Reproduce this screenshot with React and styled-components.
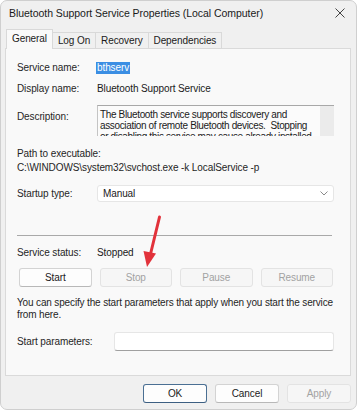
import styled, { createGlobalStyle } from "styled-components"

const Global = createGlobalStyle`
  body {
    margin: 0;
    background: #ffffff;
    font-family: 'Liberation Sans', Arial, sans-serif;
  }
`

export default function App() {
  return (<>
    <Global />
    <Window>
      <TitleBar>
        <Title>Bluetooth Support Service Properties (Local Computer)</Title>
        <Close>
          <svg width="10" height="10" viewBox="0 0 10 10">
            <path d="M0.5 0.5 L9.5 9.5 M9.5 0.5 L0.5 9.5" stroke="#444" strokeWidth="1" fill="none" />
          </svg>
        </Close>
      </TitleBar>
      <Content>
        <TabRow>
          <Tab $active>General</Tab>
          <Tab>Log On</Tab>
          <Tab>Recovery</Tab>
          <Tab>Dependencies</Tab>
        </TabRow>
        <Panel>
          <Row $mt={12}>
            <Label>Service name:</Label>
            <Selected>bthserv</Selected>
          </Row>
          <Row $mt={8}>
            <Label>Display name:</Label>
            <Value>Bluetooth Support Service</Value>
          </Row>
          <Row $mt={10} $top>
            <Label $pt={5}>Description:</Label>
            <DescBox>
              <DescText>{"The Bluetooth service supports discovery and\nassociation of remote Bluetooth devices.  Stopping\nor disabling this service may cause already installed"}</DescText>
              <Scroll />
            </DescBox>
          </Row>
          <Block $mt={11}>
            <Line>Path to executable:</Line>
            <Line>C:\WINDOWS\system32\svchost.exe -k LocalService -p</Line>
          </Block>
          <Row $mt={10}>
            <Label>Startup type:</Label>
            <Select>
              <span>Manual</span>
              <svg width="8" height="5" viewBox="0 0 8 5">
                <path d="M0.5 0.5 L4 4 L7.5 0.5" stroke="#8a8a8a" strokeWidth="1" fill="none" />
              </svg>
            </Select>
          </Row>
          <Separator />
          <Row $mt={10}>
            <Label>Service status:</Label>
            <Value>Stopped</Value>
          </Row>
          <ButtonRow>
            <Button $w={72.5}>Start</Button>
            <Button $w={72.5} disabled>Stop</Button>
            <Button $w={72.5} disabled>Pause</Button>
            <Button $w={72.5} disabled>Resume</Button>
          </ButtonRow>
          <Note>You can specify the start parameters that apply when you start the service<br />from here.</Note>
          <Row $mt={11}>
            <Label $w={97}>Start parameters:</Label>
            <Input />
          </Row>
        </Panel>
        <Footer>
          <Button $w={64} $default>OK</Button>
          <Button $w={64}>Cancel</Button>
          <Button $w={64} disabled>Apply</Button>
        </Footer>
      </Content>
      <Arrow width="30" height="60" viewBox="135 212 30 60">
        <path d="M159.5 217 L150.5 254" stroke="#e2323b" strokeWidth="3" strokeLinecap="round" fill="none" />
        <polygon points="147,267 143.5,251 156,253.5" fill="#e2323b" />
      </Arrow>
    </Window>
  </>);
}

const Window = styled.div`
position: relative;
width: 357px;
height: 410px;
box-sizing: border-box;
background: #f0f0f0;
border: 1px solid #cfcfcf;
border-radius: 7px;
overflow: hidden;
display: flex;
flex-direction: column;
font-size: 10px;
letter-spacing: -0.1px;
color: #1b1b1b;
`

const TitleBar = styled.div`
display: flex;
align-items: center;
justify-content: space-between;
height: 24px;
padding-left: 8px;
`

const Title = styled.div`
font-size: 10.5px;
letter-spacing: -0.05px;
color: #1a1a1a;
`

const Close = styled.div`
display: flex;
align-items: center;
justify-content: center;
width: 32px;
height: 24px;
`

const Content = styled.div`
display: flex;
flex-direction: column;
padding: 5px 5px 0 4px;
`

const TabRow = styled.div`
display: flex;
align-items: flex-end;
height: 19px;
padding-left: 1px;
margin-bottom: -1px;
position: relative;
z-index: 1;
`

const Tab = styled.div`
display: flex;
align-items: center;
box-sizing: border-box;
height: ${p => p.$active ? 20 : 17}px;
padding: 0 5px ${p => p.$active ? 2 : 0}px;
margin-left: ${p => p.$active ? 0 : -1}px;
background: ${p => p.$active ? '#f9f9f9' : '#f0f0f0'};
border: 1px solid #d9d9d9;
border-bottom: ${p => p.$active ? 'none' : '1px solid #d9d9d9'};
color: #1a1a1a;
&:first-child { margin-left: 0; }
`

const Panel = styled.div`
display: flex;
flex-direction: column;
box-sizing: border-box;
height: 328px;
background: #f9f9f9;
border: 1px solid #dadada;
padding: 0 16px 0 11px;
`

const Row = styled.div`
display: flex;
align-items: ${p => p.$top ? 'flex-start' : 'center'};
margin-top: ${p => p.$mt}px;
line-height: 13px;
`

const Label = styled.div`
flex: 0 0 ${p => p.$w || 80}px;
padding-top: ${p => p.$pt || 0}px;
color: #262626;
`

const Value = styled.div`
color: #1a1a1a;
`

const Selected = styled.span`
background: #3b8ee3;
color: #ffffff;
line-height: 12px;
padding: 0 1px;
margin-left: -1px;
`

const DescBox = styled.div`
display: flex;
box-sizing: border-box;
width: 237px;
height: 31px;
border-top: 1px solid #a8a8a8;
border-left: 1px solid #c4c4c4;
background: #fbfbfb;
overflow: hidden;
`

const DescText = styled.div`
flex: 1;
white-space: pre;
font-size: 10px;
letter-spacing: -0.35px;
line-height: 11px;
padding: 3px 0 0 2px;
color: #1a1a1a;
overflow: hidden;
`

const Scroll = styled.div`
flex: 0 0 14px;
background: #ebebeb;
`

const Block = styled.div`
margin-top: ${p => p.$mt}px;
`

const Line = styled.div`
line-height: 14px;
color: #1f1f1f;
`

const Select = styled.div`
display: flex;
align-items: center;
justify-content: space-between;
box-sizing: border-box;
width: 237px;
height: 17px;
padding: 0 5px 0 5px;
background: #ffffff;
border: 1px solid #e6e6e6;
border-radius: 3px;
color: #1a1a1a;
`

const Separator = styled.div`
height: 1px;
margin: 33px 2px 0 0;
background: #a9a9a9;
`

const ButtonRow = styled.div`
display: flex;
gap: 8px;
margin: 9px 0 0 2px;
`

const Button = styled.button`
box-sizing: border-box;
width: ${p => p.$w}px;
height: 19px;
padding: 0;
font-family: 'Liberation Sans', Arial, sans-serif;
font-size: 10px;
letter-spacing: -0.1px;
color: #1a1a1a;
background: #fdfdfd;
border: 1px solid ${p => p.$default ? '#4a6f93' : '#d3d3d3'};
border-bottom-color: ${p => p.$default ? '#3c5f82' : '#b8b8b8'};
border-radius: 3px;
&:disabled {
  color: #a2a2a2;
  background: #f6f6f6;
  border-color: #e3e3e3;
}
`

const Note = styled.div`
margin-top: 10px;
line-height: 12px;
white-space: nowrap;
letter-spacing: -0.15px;
color: #1f1f1f;
`

const Input = styled.div`
box-sizing: border-box;
width: 220px;
height: 19px;
background: #ffffff;
border: 1px solid #e6e6e6;
border-bottom-color: #a0a0a0;
border-radius: 3px;
`

const Footer = styled.div`
display: flex;
justify-content: flex-end;
gap: 8px;
margin-top: 8px;
`

const Arrow = styled.svg`
position: absolute;
left: 134px;
top: 211px;
pointer-events: none;
`
